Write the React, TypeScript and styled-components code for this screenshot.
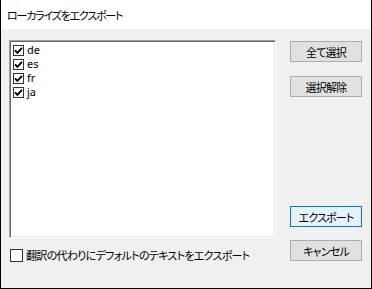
import React from 'react';
import styled, {createGlobalStyle} from 'styled-components';

const GlobalStyle = createGlobalStyle`
  html, body {
    margin: 0;
    padding: 0;
    background: #ffffff;
  }
  body {
    font-family: "Noto Sans", "Noto Sans CJK JP", sans-serif;
    font-size: 12px;
    color: #000;
  }
`

const languages = ['de', 'es', 'fr', 'ja'];

const CheckMark = () => (
    <svg width="9" height="9" viewBox="0 0 9 9">
        <path d="M1 4.3 L3.4 6.8 L8 1.8" fill="none" stroke="#000" strokeWidth="1.9"/>
    </svg>
);

export default function App() {
    return (
        <>
            <GlobalStyle/>
            <Dialog>
                <TitleBar>ローカライズをエクスポート</TitleBar>
                <Body>
                    <LeftColumn>
                        <ListBox>
                            {languages.map(lang => (
                                <ListRow key={lang}>
                                    <Box $size={11}><CheckMark/></Box>
                                    <RowLabel>{lang}</RowLabel>
                                </ListRow>
                            ))}
                        </ListBox>
                        <OptionRow>
                            <Box $size={13}/>
                            <JpLabel>翻訳の代わりにデフォルトのテキストをエクスポート</JpLabel>
                        </OptionRow>
                    </LeftColumn>
                    <RightColumn>
                        <Button $top={1}>全て選択</Button>
                        <Button $top={14}>選択解除</Button>
                        <Button $top={109} $primary>エクスポート</Button>
                        <Button $top={13}>キャンセル</Button>
                    </RightColumn>
                </Body>
            </Dialog>
        </>
    );
}

const Dialog = styled.div`
  width: 372px;
  height: 289px;
  box-sizing: border-box;
  border: 1px solid #000;
  border-top: none;
  display: flex;
  flex-direction: column;
  background: #f0f0f0;
`

const TitleBar = styled.div`
  height: 29px;
  flex-shrink: 0;
  background: #fff;
  display: flex;
  align-items: center;
  padding-left: 6px;
  font-family: "Noto Sans CJK JP", sans-serif;
  font-feature-settings: "palt";
  font-size: 11px;
  letter-spacing: -1.2px;
  color: #000;
`

const Body = styled.div`
  flex: 1;
  display: flex;
  padding: 11px 0 0 8px;
`

const LeftColumn = styled.div`
  width: 267px;
  flex-shrink: 0;
  display: flex;
  flex-direction: column;
`

const ListBox = styled.div`
  width: 267px;
  height: 198px;
  box-sizing: border-box;
  background: #fff;
  border-top: 1px solid #a0a0a0;
  border-left: 1px solid #a0a0a0;
  border-right: 1px solid #fff;
  border-bottom: 1px solid #fff;
  box-shadow: inset 1px 1px 0 #696969, inset -1px -1px 0 #e3e3e3;
  padding: 2px 0 0 3px;
`

const ListRow = styled.div`
  height: 14px;
  display: flex;
  align-items: center;
  gap: 3px;
`

const Box = styled.div<{ $size: number }>`
  width: ${p => p.$size}px;
  height: ${p => p.$size}px;
  box-sizing: border-box;
  border: 1px solid #333;
  background: #fff;
  display: flex;
  align-items: center;
  justify-content: center;
  flex-shrink: 0;
`

const RowLabel = styled.span`
  font-family: "Noto Sans", sans-serif;
  font-size: 11px;
  line-height: 14px;
  color: #000;
`

const OptionRow = styled.div`
  display: flex;
  align-items: center;
  gap: 3px;
  margin-top: 9px;
  padding-left: 1px;
`

const JpLabel = styled.span`
  font-family: "Noto Sans CJK JP", sans-serif;
  font-feature-settings: "palt";
  font-size: 11px;
  letter-spacing: -0.7px;
  white-space: nowrap;
`

const RightColumn = styled.div`
  display: flex;
  flex-direction: column;
  margin-left: 14px;
`

const Button = styled.div<{ $top: number; $primary?: boolean }>`
  width: 72px;
  height: 21px;
  box-sizing: border-box;
  margin-top: ${p => p.$top}px;
  border: 1px solid ${p => (p.$primary ? '#0078d7' : '#adadad')};
  background: ${p => (p.$primary ? '#e5f1fb' : '#e1e1e1')};
  display: flex;
  align-items: center;
  justify-content: center;
  font-family: "Noto Sans CJK JP", sans-serif;
  font-feature-settings: "palt";
  font-size: 11px;
  letter-spacing: -0.8px;
  color: #000;
`
